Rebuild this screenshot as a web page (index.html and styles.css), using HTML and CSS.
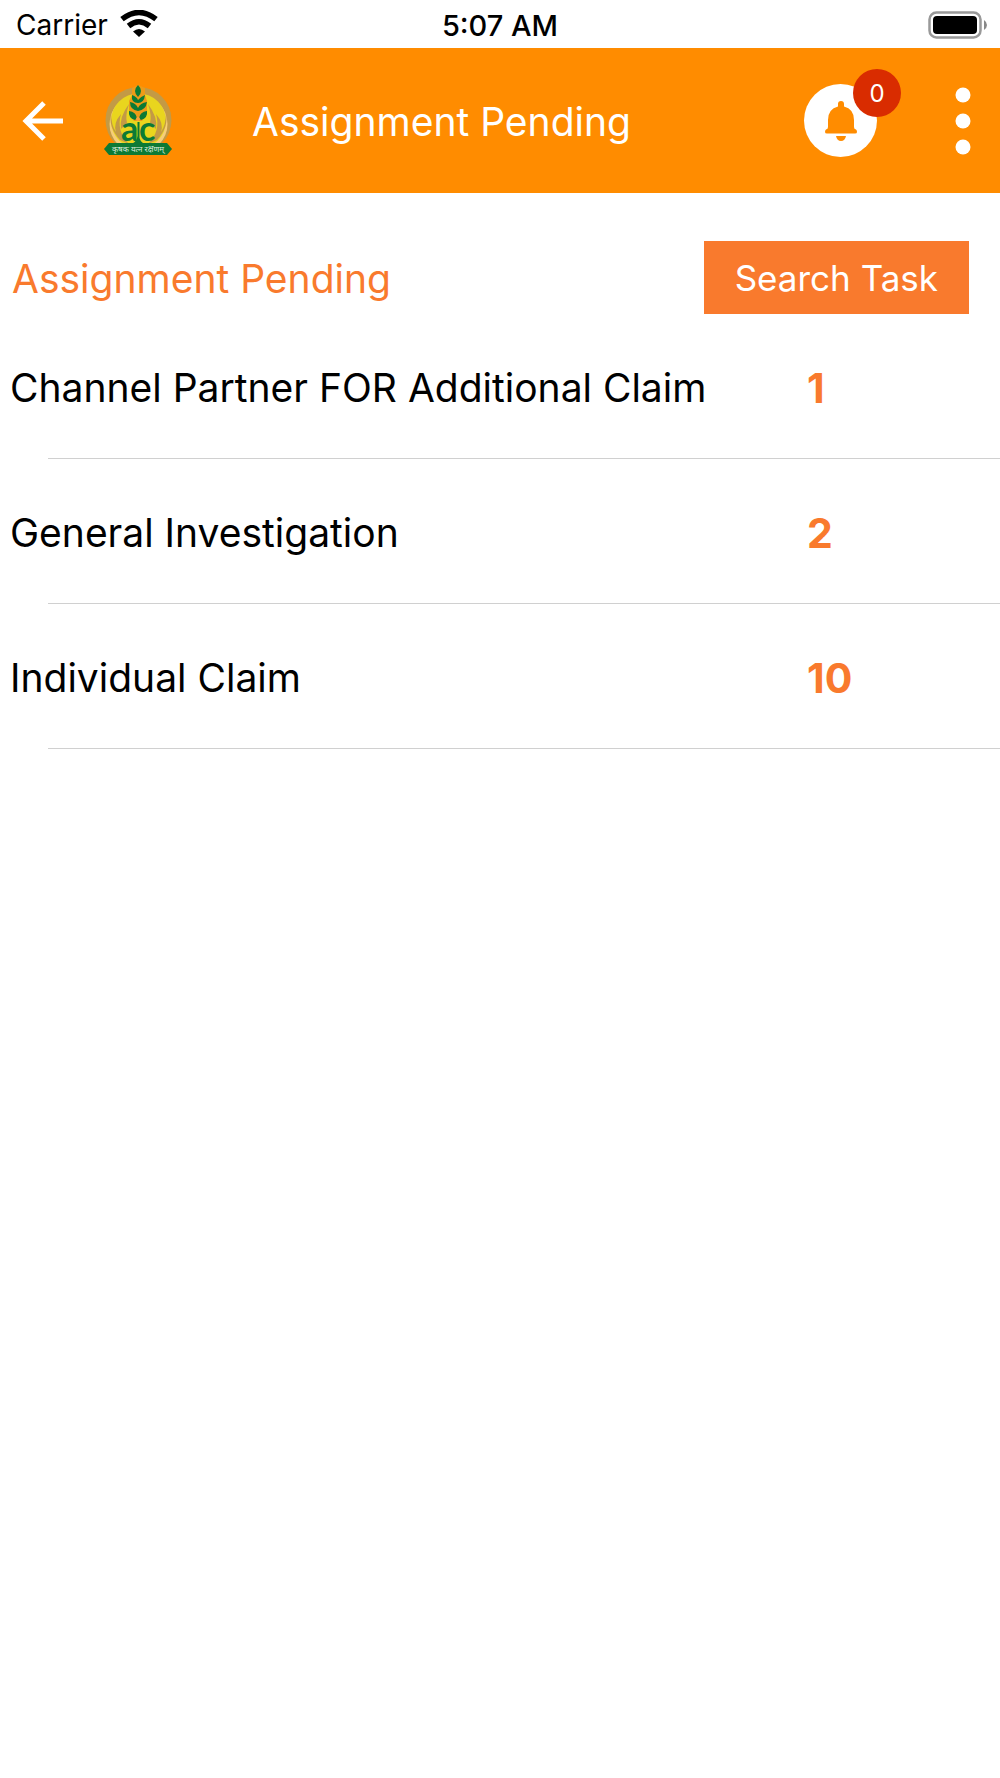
FILE: index.html
```html
<!DOCTYPE html>
<html lang="en">
<head>
<meta charset="utf-8">
<meta name="viewport" content="width=device-width, initial-scale=1">
<title>Assignment Pending</title>
<link rel="stylesheet" href="styles.css">
</head>
<body>
<div class="status-bar">
  <div class="carrier">
    <span>Carrier</span>
    <svg width="38" height="28" viewBox="0 0 38 28" aria-hidden="true">
      <g fill="none" stroke="#000" stroke-width="5.500">
        <path d="M2 9.200Q19-4.200 36 9.200"/>
        <path d="M8.500 16Q19 7.500 29.500 16"/>
      </g>
      <path d="M13 21.500Q19 16.500 25 21.500L19 27z"/>
    </svg>
  </div>
  <span class="time">5:07 AM</span>
  <svg class="battery" width="60" height="28" viewBox="0 0 60 28" aria-label="Battery full" role="img">
    <rect x="1.500" y="1.500" width="51" height="25" rx="7" fill="none" stroke="#999" stroke-width="2.500"/>
    <rect x="5" y="5" width="44" height="18" rx="4"/>
    <path d="M56 9Q59 11 59 14T56 19z" fill="#888"/>
  </svg>
</div>
<header class="app-bar">
  <button class="icon-button" type="button" aria-label="Back">
    <svg width="42" height="40" viewBox="0 0 42 40" aria-hidden="true">
      <path d="M22 2L4 20L22 38M4 20H41" fill="none" stroke="#fff" stroke-width="5"/>
    </svg>
  </button>
  <svg class="logo" width="68" height="72" viewBox="0 0 68 72" aria-label="AIC logo" role="img">
    <circle cx="34.500" cy="35" r="33" fill="#c39a45"/>
    <circle cx="34.500" cy="39" r="29" fill="#f6ce78"/>
    <circle cx="34.500" cy="36" r="27.500" fill="#e9d51e"/>
    <path d="M7 27Q4 42 16 55L25 59Q12 46 17 29Q9 38 12 47Q7 40 7 27zM62 27Q65 42 53 55L44 59Q57 46 52 29Q60 38 57 47Q62 40 62 27z" fill="#c39a45"/>
    <path d="M17 44Q15 32 25 19Q21 31 23 38zM52 44Q54 32 44 19Q48 31 46 38z" fill="#c39a45"/>
    <path d="M28 3L34 0L41 3V10L43 16V29L38 36H30L25 29V16L28 10z" fill="#ee9b18"/>
    <g fill="#0c7a35">
      <path d="M34 0Q28 6 34 12Q40 6 34 0z"/>
      <path d="M34 18Q27 18 28 10Q33 12 34 15Q36 12 41 10Q40 18 34 18z"/>
      <path d="M34 26Q26 25 26 17Q32 18 34 23Q36 18 43 17Q42 25 34 26z"/>
      <path d="M31 35Q24 33 25 26Q32 27 33 33L31 35zM37 35Q44 33 43 26Q36 27 35 33z"/>
      <path d="M33.500 37H35.500V53Q37 59 45 60H24Q33 58 33.500 51z"/>
      <path d="M5 58H63L68 64L63 70H5L0 64z"/>
    </g>
    <circle cx="34" cy="34" r="2" fill="#f8a23a"/>
    <text class="logo-mark" x="17" y="56">a</text>
    <text class="logo-mark" x="35" y="56">c</text>
    <text class="logo-motto" x="34" y="67" text-anchor="middle">कृषक यत्न रक्षणम्</text>
  </svg>
  <h1 class="app-title">Assignment Pending</h1>
  <button class="icon-button bell" type="button" aria-label="Notifications">
    <svg width="32" height="40" viewBox="0 0 32 40" fill="#ff8c00" aria-hidden="true">
      <path d="M13 3Q13 0 16 0T19 3V5.500Q29 8 29 19V26Q29 28 31 28.500Q32 29 32 31Q32 32.500 30 32.500H2Q0 32.500 0 31Q0 29 1 28.500Q3 28 3 26V19Q3 8 13 5.500z"/>
      <path d="M11 35H21Q20 40 16 40T11 35z"/>
    </svg>
    <span class="badge">0</span>
  </button>
  <button class="icon-button" type="button" aria-label="More options">
    <svg width="16" height="68" viewBox="0 0 16 68" fill="#fff" aria-hidden="true">
      <circle cx="8" cy="8" r="7.500"/><circle cx="8" cy="34" r="7.500"/><circle cx="8" cy="60" r="7.500"/>
    </svg>
  </button>
</header>
<main>
  <div class="section-head">
    <h2 class="section-title">Assignment Pending</h2>
    <button class="search-button" type="button">Search Task</button>
  </div>
  <ul class="tasks">
    <li class="task"><span class="task-name">Channel Partner FOR Additional Claim</span><span class="task-count">1</span></li>
    <li class="task"><span class="task-name">General Investigation</span><span class="task-count">2</span></li>
    <li class="task"><span class="task-name">Individual Claim</span><span class="task-count">10</span></li>
  </ul>
</main>
</body>
</html>
```
FILE: styles.css
```css
* {
  box-sizing: border-box;
}

body {
  margin: 0;
  background: #fff;
  color: #000;
  font-family: Inter, "Liberation Sans", sans-serif;
  font-size: 39px;
}

button {
  border: 0;
  padding: 0;
  font-family: inherit;
  cursor: pointer;
}

svg {
  display: block;
  flex: none;
}

.status-bar {
  display: grid;
  grid-template-columns: 1fr auto 1fr;
  align-items: center;
  height: 48px;
  padding: 2px 12px 0;
  font-size: 28px;
}

.carrier {
  display: flex;
  align-items: center;
  gap: 12px;
  padding-left: 4px;
}

.carrier svg {
  margin-bottom: 2px;
}

.time {
  font-size: 29px;
  font-weight: 500;
}

.battery {
  justify-self: end;
}

.app-bar {
  display: flex;
  align-items: center;
  height: 145px;
  padding: 0 29px 0 22px;
  background: #ff8c00;
  color: #fff;
}

.icon-button {
  display: flex;
  align-items: center;
  justify-content: center;
  background: none;
}

.logo {
  margin-left: 40px;
}

.logo-mark {
  fill: #0c7a35;
  font-family: Lato, "Open Sans", sans-serif;
  font-size: 34px;
  font-weight: 700;
}

.logo-motto {
  fill: #d9ead9;
  font-family: "Noto Sans", sans-serif;
  font-size: 8px;
  font-weight: 400;
}

.app-title,
.section-title {
  margin: 0;
  padding-top: 3px;
  font-size: 39px;
  font-weight: 400;
  line-height: 48px;
}

.app-title {
  flex: 1;
  margin-left: 80px;
}

.bell {
  position: relative;
  width: 73px;
  height: 73px;
  margin-right: 78px;
  border-radius: 50%;
  background: #fff;
}

.badge {
  position: absolute;
  top: -15px;
  right: -24px;
  width: 48px;
  height: 48px;
  border-radius: 50%;
  background: #d92c00;
  color: #fff;
  font-size: 24px;
  line-height: 50px;
  text-align: center;
}

.section-head {
  display: flex;
  align-items: center;
  justify-content: space-between;
  padding: 48px 31px 0 12px;
}

.section-title {
  color: #f97a2d;
}

.search-button {
  height: 73px;
  padding: 0 31px;
  background: #f97a2d;
  color: #fff;
  font-size: 35px;
}

.tasks {
  margin: 0;
  padding: 0;
  list-style: none;
}

.task {
  display: grid;
  grid-template-columns: 4fr 1fr;
  align-items: center;
  height: 145px;
  padding: 2px 0 0 10px;
  background: linear-gradient(#d0d0d0, #d0d0d0) 48px 100% / 100% 1px no-repeat;
}

.task-count {
  padding-left: 5px;
  color: #f97a2d;
  font-size: 41px;
  font-weight: 700;
}
```
